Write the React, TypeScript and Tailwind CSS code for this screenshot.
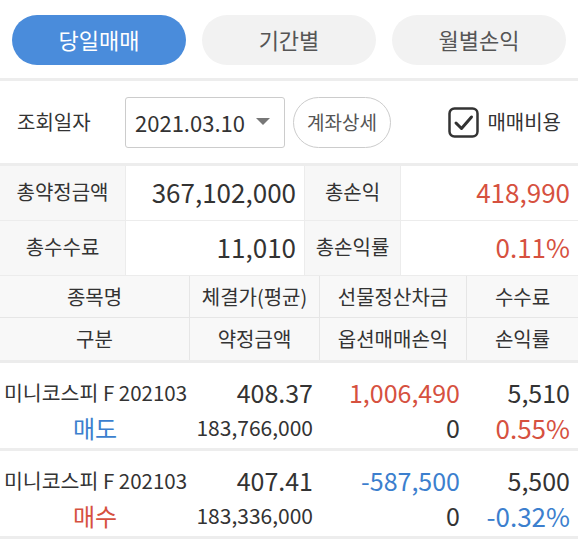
import React from "react";

const font = { fontFamily: '"Noto Sans CJK KR", "Noto Sans", sans-serif' };

const RED = "text-[#d6513f]";
const BLUE = "text-[#3c7fce]";

function Tabs() {
  const tabs = ["당일매매", "기간별", "월별손익"];
  return (
    <div className="grid grid-cols-3 gap-4 px-3 pt-[15px] pb-[13px] border-b-[3px] border-[#ededed]">
      {tabs.map((t, i) => (
        <div
          key={t}
          className={
            "h-[50px] rounded-full flex items-center justify-center text-[22px] pb-[2px] " +
            (i === 0 ? "bg-[#4a8cdb] text-white" : "bg-[#f2f2f2] text-[#555]")
          }
        >
          {t}
        </div>
      ))}
    </div>
  );
}

function Filter() {
  return (
    <div className="h-[85px] flex items-center border-b-[3px] border-[#ededed] text-[#333]">
      <span className="ml-[17px] text-[20px] w-[75px] whitespace-nowrap">조회일자</span>
      <div className="ml-[33px] w-[160px] h-[51px] border border-[#ccc] rounded-[3px] flex items-center pl-[9px] text-[22px]">
        2021.03.10
        <svg width="14" height="8" viewBox="0 0 14 8" className="ml-[11px]">
          <path d="M0 0 L14 0 L7 7 Z" fill="#777" />
        </svg>
      </div>
      <div className="ml-[8px] w-[98px] h-[51px] border border-[#ccc] rounded-full flex items-center justify-center text-[19px] text-[#555]">
        계좌상세
      </div>
      <div className="ml-auto mr-[17px] flex items-center gap-[8px]">
        <svg width="31" height="31" viewBox="0 0 31 31">
          <rect x="1.5" y="1.5" width="28" height="28" rx="5" fill="white" stroke="#333" strokeWidth="2.5" />
          <path d="M8 16 L13.5 21.5 L23.5 10" fill="none" stroke="#333" strokeWidth="3" strokeLinecap="round" strokeLinejoin="round" />
        </svg>
        <span className="text-[20px]">매매비용</span>
      </div>
    </div>
  );
}

function Summary() {
  const cellL = "bg-[#f7f7f7] flex items-center justify-center pb-[2px] text-[20px] text-[#333] border-b border-[#ececec]";
  const cellV = "bg-white flex items-center justify-end pr-[8px] pb-[3px] text-[26px] border-b border-[#ececec] border-l border-r";
  return (
    <div className="grid grid-cols-[125px_180px_95px_1fr] auto-rows-[55px]">
      <div className={cellL}>총약정금액</div>
      <div className={cellV + " text-[#333]"}>367,102,000</div>
      <div className={cellL}>총손익</div>
      <div className={cellV + " border-r-0 " + RED}>418,990</div>
      <div className={cellL}>총수수료</div>
      <div className={cellV + " text-[#333]"}>11,010</div>
      <div className={cellL}>총손익률</div>
      <div className={cellV + " border-r-0 " + RED}>0.11%</div>
    </div>
  );
}

function Header() {
  const rows = [
    ["종목명", "체결가(평균)", "선물정산차금", "수수료"],
    ["구분", "약정금액", "옵션매매손익", "손익률"],
  ];
  return (
    <div className="grid grid-cols-[190px_130px_147px_1fr] auto-rows-[42px] bg-[#f8f8f8] border-b-[3px] border-[#ececec]">
      {rows.flat().map((t, i) => (
        <div
          key={i}
          className={
            "flex items-center justify-center text-[20px] text-[#333] border-[#e6e6e6] " +
            (i < 4 ? "border-b " : "") +
            (i % 4 !== 3 ? "border-r" : "")
          }
        >
          {t}
        </div>
      ))}
    </div>
  );
}

type Row = {
  price: string;
  diff: string;
  diffColor: string;
  fee: string;
  side: string;
  sideColor: string;
  amount: string;
  opt: string;
  rate: string;
  rateColor: string;
};

const data: Row[] = [
  { price: "408.37", diff: "1,006,490", diffColor: RED, fee: "5,510", side: "매도", sideColor: BLUE, amount: "183,766,000", opt: "0", rate: "0.55%", rateColor: RED },
  { price: "407.41", diff: "-587,500", diffColor: BLUE, fee: "5,500", side: "매수", sideColor: RED, amount: "183,336,000", opt: "0", rate: "-0.32%", rateColor: BLUE },
];

function DataRow({ r }: { r: Row }) {
  return (
    <div className="grid grid-cols-[190px_130px_147px_1fr] h-[88px] border-b-[3px] border-[#ededed] pt-[12px] text-[#333]">
      <div className="flex flex-col items-start">
        <span className="pl-[4px] text-[20.5px] leading-[35px] whitespace-nowrap">미니코스피 F 202103</span>
        <span className={"self-center text-[24px] leading-[35px] " + r.sideColor}>{r.side}</span>
      </div>
      <div className="flex flex-col items-end pr-[7px]">
        <span className="text-[25px] leading-[35px]">{r.price}</span>
        <span className="text-[21px] leading-[35px]">{r.amount}</span>
      </div>
      <div className="flex flex-col items-end pr-[7px]">
        <span className={"text-[25px] leading-[35px] " + r.diffColor}>{r.diff}</span>
        <span className="text-[25px] leading-[35px]">{r.opt}</span>
      </div>
      <div className="flex flex-col items-end pr-[8px]">
        <span className="text-[25px] leading-[35px]">{r.fee}</span>
        <span className={"text-[26px] leading-[35px] " + r.rateColor}>{r.rate}</span>
      </div>
    </div>
  );
}

export default function App() {
  return (
    <div className="w-[578px] h-[543px] bg-white overflow-hidden" style={font}>
      <Tabs />
      <Filter />
      <Summary />
      <Header />
      {data.map((r, i) => (
        <DataRow key={i} r={r} />
      ))}
    </div>
  );
}
